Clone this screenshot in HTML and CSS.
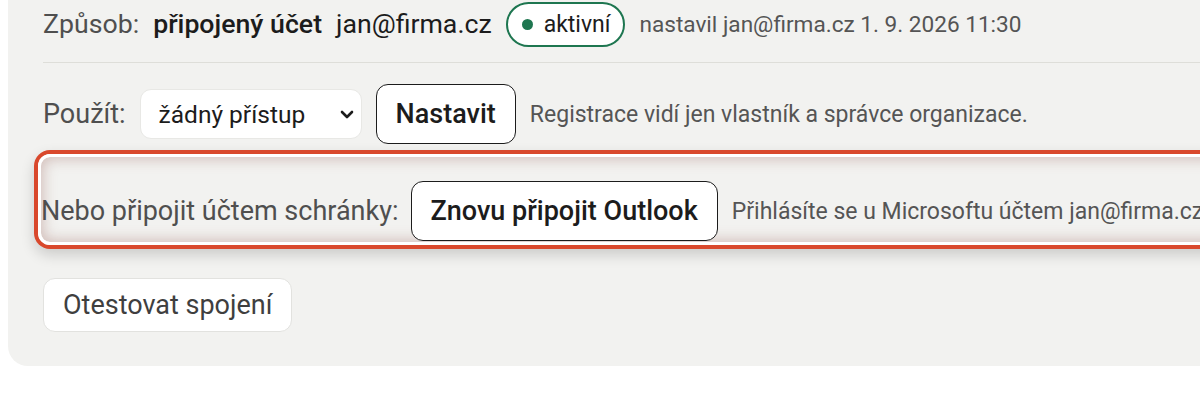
FILE: index.html
```html
<!DOCTYPE html>
<html lang="cs">
<head>
  <meta charset="UTF-8">
  <meta name="viewport" content="width=device-width, initial-scale=1.0">
  <title>Připojení schránky</title>
  <link rel="stylesheet" href="styles.css">
</head>
<body>

  <div class="panel">
    <!-- Current connection -->
    <div class="row status-row">
      <span class="label">Způsob:</span>
      <strong class="value">připojený účet</strong>
      <span class="value">jan@firma.cz</span>
      <span class="badge"><span class="dot"></span>aktivní</span>
      <span class="note">nastavil jan@firma.cz 1. 9. 2026 11:30</span>
    </div>

    <hr class="divider">

    <div class="row">
      <span class="label">Použít:</span>
      <!-- Custom dropdown -->
      <div class="select" role="button">
        <span class="select-text">žádný přístup</span>
        <svg width="14" height="9" viewBox="0 0 14 9">
          <path d="M2 2 L7 7 L12 2" fill="none" stroke="#1c1c1c" stroke-width="2.6" stroke-linecap="round" stroke-linejoin="round"/>
        </svg>
      </div>
      <button class="button primary">Nastavit</button>
      <span class="note">Registrace vidí jen vlastník a správce organizace.</span>
    </div>

    <!-- Highlighted mailbox option -->
    <div class="highlight">
      <div class="row">
        <span class="label">Nebo připojit účtem schránky:</span>
        <button class="button primary">Znovu připojit Outlook</button>
        <span class="note">Přihlásíte se u Microsoftu účtem jan@firma.cz</span>
      </div>
    </div>

    <div class="row test-row">
      <button class="button plain">Otestovat spojení</button>
    </div>
  </div>

</body>
</html>
```

FILE: styles.css
```css
* {
  margin: 0;
  padding: 0;
  box-sizing: border-box;
}

body {
  font-family: 'Roboto', 'Noto Sans', sans-serif;
  background-color: #fff;
  color: #1c1c1c;
  overflow: hidden;
  height: 400px;
}

.panel {
  width: 1260px;
  margin: -20px 0 0 8px;
  padding: 21px 0 34px 35px;
  background-color: #f2f2f0;
  border-radius: 20px;
}

.row {
  display: flex;
  align-items: center;
  gap: 14px;
  font-size: 27px;
  white-space: nowrap;
}

.label {
  color: #4f4f4f;
}

.value {
  color: #1c1c1c;
}

strong.value {
  font-weight: 500;
}

.note {
  font-size: 23px;
  color: #555;
}

.status-row {
  height: 46px;
  font-size: 26.7px;
}

.status-row .note {
  font-size: 22.6px;
}

.badge {
  display: inline-flex;
  align-items: center;
  gap: 11px;
  height: 45px;
  padding: 0 13px 0 14px;
  border: 2px solid #1e7650;
  border-radius: 23px;
  background-color: #fff;
  font-size: 23px;
  color: #1c1c1c;
}

.dot {
  width: 11px;
  height: 11px;
  border-radius: 50%;
  background-color: #1e7650;
}

.divider {
  border: none;
  border-top: 1px solid #deded9;
  margin: 15px 0 21px 0;
}

.select {
  display: flex;
  flex: none;
  align-items: center;
  height: 50px;
  width: 222px;
  padding-right: 7px;
  font-size: 24.5px;
  color: #1c1c1c;
  background-color: #fff;
  border: 1px solid #e8e8e5;
  border-radius: 11px;
  cursor: pointer;
}

.select-text {
  flex: 1;
  padding-left: 18px;
}

.button {
  font-family: inherit;
  font-size: 27px;
  border-radius: 12px;
  background-color: #fff;
  cursor: pointer;
}

.button.primary {
  height: 60px;
  padding: 0 19px;
  border: 1.5px solid #1c1c1c;
  font-weight: 500;
  color: #1c1c1c;
}

.button.plain {
  height: 54px;
  padding: 0 19px;
  border: 1px solid #e2e2df;
  color: #3f3f3f;
}

.highlight {
  margin: 10px 0 0 -5px;
  padding: 24px 0 1px 0;
  border: 3px solid #fff;
  border-radius: 12px;
  box-shadow:
    0 0 0 4px #d9482c,
    0 6px 14px 4px rgba(0, 0, 0, 0.16),
    inset 0 0 14px 2px rgba(150, 90, 80, 0.35);
}

.highlight .row {
  gap: 12px;
}

.highlight .note {
  margin-left: 2px;
}

.test-row {
  margin-top: 33px;
}
```
